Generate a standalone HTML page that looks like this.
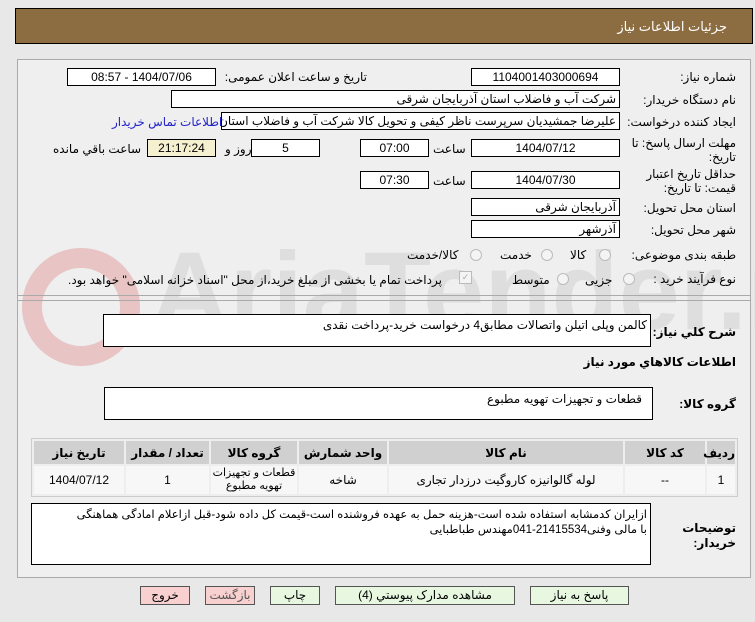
<!DOCTYPE html>
<html><head><meta charset="utf-8"><style>
body{margin:0;width:755px;height:622px;background:#e8e8e8;font-family:"Liberation Sans","DejaVu Sans",sans-serif;font-size:12px;color:#000;position:relative;overflow:hidden}
.a{position:absolute}
.box{position:absolute;background:#fff;border:1px solid #000;box-sizing:border-box;direction:rtl;padding:0 3px;line-height:16px;white-space:nowrap;overflow:hidden}
.c{text-align:center}
.l{position:absolute;direction:rtl;white-space:nowrap;line-height:14px}
.rad{position:absolute;width:10px;height:10px;border:1px solid #bbb;border-radius:50%;background:#f4f4f4}
.btn{position:absolute;top:586px;height:19px;border:1px solid #555;box-sizing:border-box;text-align:center;line-height:17px;direction:rtl}
table{border-collapse:separate;border-spacing:2px;width:100%;direction:rtl;font-size:12px;table-layout:fixed}
td{text-align:center;direction:rtl;padding:0}
</style></head><body>
<div class="a" style="left:15px;top:8px;width:738px;height:36px;background:#8c6c41;border:1px solid #000;box-sizing:border-box"></div>
<div class="l" style="right:28px;top:20px;color:#fff;font-size:13px">جزئیات اطلاعات نیاز</div>
<div class="a" style="left:17px;top:59px;width:734px;height:519px;border:1px solid #aaa;box-sizing:border-box;background:#efefef"></div>
<div class="a" style="left:0;top:230px;width:755px;height:150px;overflow:hidden">
<div class="a" style="left:22px;top:18px;width:118px;height:118px;border:20px solid #e8c4c4;border-radius:50%;box-sizing:border-box"></div>
<div class="a" style="left:150px;top:2px;font-size:110px;font-weight:bold;color:#dedede;line-height:120px;white-space:nowrap">AriaTender.net</div>
</div>

<div class="l" style="right:19px;top:70px">شماره نیاز:</div>
<div class="box c" style="left:471px;top:68px;width:149px;height:18px">1104001403000694</div>
<div class="l" style="right:388px;top:70px">تاریخ و ساعت اعلان عمومی:</div>
<div class="box c" style="left:67px;top:68px;width:149px;height:18px">1404/07/06 - 08:57</div>

<div class="l" style="right:19px;top:93px">نام دستگاه خریدار:</div>
<div class="box" style="left:171px;top:90px;width:449px;height:18px">شرکت آب و فاضلاب استان آذربایجان شرقی</div>

<div class="l" style="right:19px;top:115px">ایجاد کننده درخواست:</div>
<div class="box" style="left:221px;top:112px;width:399px;height:18px">علیرضا جمشیدیان سرپرست ناظر کیفی و تحویل کالا شرکت آب و فاضلاب استان</div>
<div class="l" style="left:112px;top:115px;color:#22c">اطلاعات تماس خریدار</div>

<div class="l" style="right:19px;top:136px;line-height:14px">مهلت ارسال پاسخ: تا<br>تاریخ:</div>
<div class="box c" style="left:471px;top:139px;width:149px;height:18px">1404/07/12</div>
<div class="l" style="left:433px;top:142px">ساعت</div>
<div class="box c" style="left:360px;top:139px;width:69px;height:18px">07:00</div>
<div class="box c" style="left:251px;top:139px;width:69px;height:18px">5</div>
<div class="l" style="left:225px;top:142px">روز و</div>
<div class="box c" style="left:147px;top:139px;width:69px;height:18px;background:#f5f0d0">21:17:24</div>
<div class="l" style="left:53px;top:142px">ساعت باقي مانده</div>

<div class="l" style="right:19px;top:167px;line-height:14px">حداقل تاریخ اعتبار<br>قیمت: تا تاریخ:</div>
<div class="box c" style="left:471px;top:171px;width:149px;height:18px">1404/07/30</div>
<div class="l" style="left:433px;top:174px">ساعت</div>
<div class="box c" style="left:360px;top:171px;width:69px;height:18px">07:30</div>

<div class="l" style="right:19px;top:201px">استان محل تحویل:</div>
<div class="box" style="left:471px;top:198px;width:149px;height:18px">آذربایجان شرقی</div>
<div class="l" style="right:19px;top:223px">شهر محل تحویل:</div>
<div class="box" style="left:471px;top:220px;width:149px;height:18px">آذرشهر</div>

<div class="l" style="right:19px;top:248px">طبقه بندی موضوعی:</div>
<div class="rad" style="left:599px;top:249px"></div><div class="l" style="left:570px;top:248px">کالا</div>
<div class="rad" style="left:541px;top:249px"></div><div class="l" style="left:500px;top:248px">خدمت</div>
<div class="rad" style="left:470px;top:249px"></div><div class="l" style="left:407px;top:248px">کالا/خدمت</div>

<div class="l" style="right:19px;top:272px">نوع فرآیند خرید :</div>
<div class="rad" style="left:623px;top:273px"></div><div class="l" style="left:585px;top:273px">جزیی</div>
<div class="rad" style="left:557px;top:273px"></div><div class="l" style="left:512px;top:273px">متوسط</div>
<div class="a" style="left:459px;top:271px;width:11px;height:11px;border:1px solid #bbb;background:#f4f4f4;color:#aaa;font-size:9px;line-height:11px;text-align:center">✓</div>
<div class="l" style="left:68px;top:273px">پرداخت تمام یا بخشی از مبلغ خرید،از محل "اسناد خزانه اسلامی" خواهد بود.</div>

<div class="a" style="left:17px;top:295px;width:734px;border-top:1px solid #aaa"></div>
<div class="a" style="left:17px;top:300px;width:734px;border-top:1px solid #aaa"></div>

<div class="l" style="right:19px;top:325px;font-weight:bold">شرح كلي نياز:</div>
<div class="box" style="left:103px;top:314px;width:548px;height:33px;line-height:20px">کالمن وپلی اتیلن واتصالات مطابق4 درخواست خرید-پرداخت نقدی</div>
<div class="l" style="right:19px;top:355px;font-weight:bold">اطلاعات كالاهاي مورد نياز</div>
<div class="l" style="right:19px;top:397px;font-weight:bold">گروه کالا:</div>
<div class="box" style="left:104px;top:387px;width:549px;height:33px;line-height:22px;padding-right:10px">قطعات و تجهیزات تهویه مطبوع</div>

<div class="a" style="left:31px;top:438px;width:707px;height:59px;border:1px solid #ccc;box-sizing:border-box;background:#eee">
<table>
<tr style="background:#d0d0d0;font-weight:bold;height:23px"><td style="width:28px">ردیف</td><td style="width:80px">کد کالا</td><td style="width:234px">نام کالا</td><td style="width:88px">واحد شمارش</td><td style="width:86px">گروه کالا</td><td style="width:83px">تعداد / مقدار</td><td>تاریخ نیاز</td></tr>
<tr style="background:#f7f7f7;height:28px"><td>1</td><td>--</td><td>لوله گالوانیزه کاروگیت درزدار تجاری</td><td>شاخه</td><td style="line-height:13px;font-size:11px">قطعات و تجهیزات<br>تهویه مطبوع</td><td>1</td><td>1404/07/12</td></tr>
</table></div>

<div class="l" style="right:19px;top:521px;font-weight:bold;line-height:15px">توضیحات<br>خریدار:</div>
<div class="box" style="left:31px;top:503px;width:620px;height:62px;line-height:15px;white-space:nowrap;padding-top:4px;font-size:11.5px">ازایران کدمشابه استفاده شده است-هزینه حمل به عهده فروشنده است-قیمت کل داده شود-قبل ازاعلام امادگی هماهنگی<br>با مالی وفنی21415534-041مهندس طباطبایی</div>

<div class="btn" style="left:530px;width:99px;background:#e8f8e0">پاسخ به نیاز</div>
<div class="btn" style="left:335px;width:180px;background:#e8f8e0">مشاهده مدارک پیوستي (4)</div>
<div class="btn" style="left:270px;width:50px;background:#e8f8e0">چاپ</div>
<div class="btn" style="left:205px;width:50px;background:#f8d0d0;color:#555">بازگشت</div>
<div class="btn" style="left:140px;width:50px;background:#f8d0d0">خروج</div>
</body></html>
